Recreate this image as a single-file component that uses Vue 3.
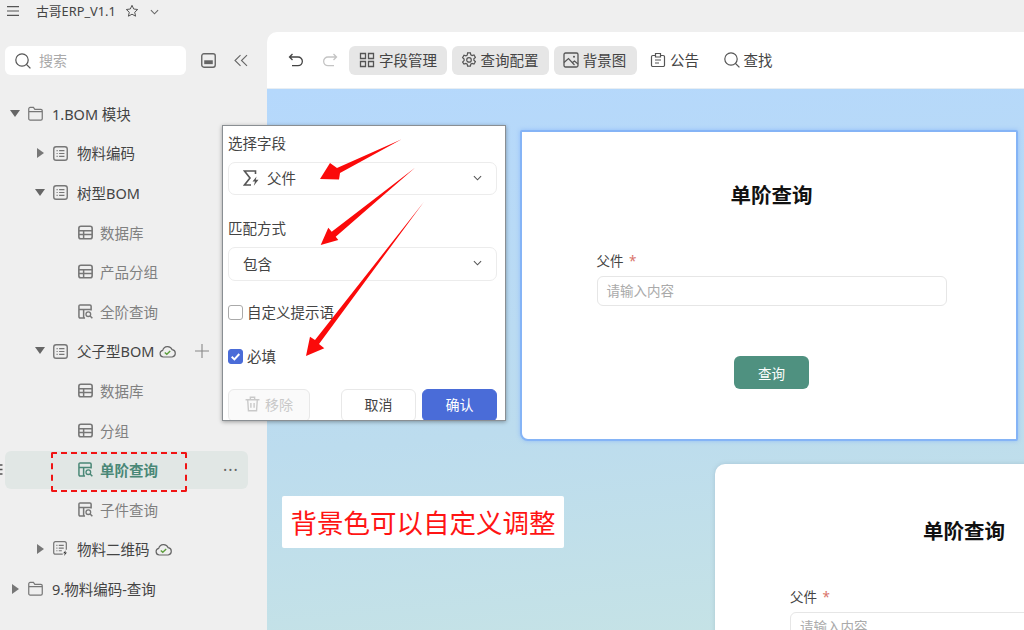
<template>
  <div class="app">
    <svg class="sprite" width="0" height="0">
      <defs>
        <symbol id="i-folder" viewBox="0 0 16 16">
          <path d="M.8 3a1.500 1.500 0 0 1 1.500-1.500h3.500l1.500 2h6.400A1.500 1.500 0 0 1 15.200 5v8.500a1.500 1.500 0 0 1-1.500 1.500H2.300a1.500 1.500 0 0 1-1.500-1.500zM.8 6h14.400" fill="none" stroke="currentColor" stroke-width="1.300" />
        </symbol>
        <symbol id="i-list" viewBox="0 0 16 16">
          <rect x=".8" y=".8" width="14.400" height="14.400" rx="2.500" fill="none" stroke="currentColor" stroke-width="1.500" />
          <path d="M3.800 5h1.200M3.800 8h1.200M3.800 11h1.200M6.500 5h5.700M6.500 8h5.700M6.500 11h5.700" stroke="currentColor" stroke-width="1.300" />
        </symbol>
        <symbol id="i-listbolt" viewBox="0 0 17 17">
          <path d="M11 15H2.800A1.900 1.900 0 0 1 .8 13V2.800A1.900 1.900 0 0 1 2.800.8h10.400a1.900 1.900 0 0 1 1.900 2V10" fill="none" stroke="currentColor" stroke-width="1.400" />
          <path d="M3.800 5h1.200M3.800 8h1.200M3.800 11h1.200M6.500 5h5.700M6.500 8h5.700M6.500 11h3.500" stroke="currentColor" stroke-width="1.300" />
          <path d="M14.500 10.500l-3 3.500h2l-1 3 3.300-4h-2z" fill="#333" />
        </symbol>
        <symbol id="i-table" viewBox="0 0 16 16">
          <rect x=".9" y="1.400" width="14.200" height="13.200" rx="2.200" fill="none" stroke="currentColor" stroke-width="1.700" />
          <path d="M1 6h14M1 10.200h14M6 6v8.500" stroke="currentColor" stroke-width="1.600" />
        </symbol>
        <symbol id="i-query" viewBox="0 0 16 16">
          <path d="M7.500 15H2.300A1.300 1.300 0 0 1 1 13.700V2.300A1.300 1.300 0 0 1 2.300 1h10.400A1.300 1.300 0 0 1 14 2.300V7M1 5.800h13M6 5.800V15" fill="none" stroke="currentColor" stroke-width="1.600" />
          <circle cx="11" cy="10.800" r="2.500" fill="none" stroke="currentColor" stroke-width="1.400" />
          <path d="M12.900 12.700l2.400 2.500" stroke="currentColor" stroke-width="1.600" />
        </symbol>
        <symbol id="i-search" viewBox="0 0 16 16">
          <circle cx="7" cy="7" r="6.200" fill="none" stroke="currentColor" stroke-width="1.200" />
          <path d="M11.400 11.400l4 4" stroke="currentColor" stroke-width="1.300" />
        </symbol>
        <symbol id="i-chevron" viewBox="0 0 10 6">
          <path d="M1 1l4 4 4-4" fill="none" stroke="currentColor" stroke-width="1.200" />
        </symbol>
        <symbol id="i-sigma" viewBox="0 0 16 16">
          <path d="M12.500 4V1H1.500L7 8 1.500 15H8" fill="none" stroke="currentColor" stroke-width="1.600" />
          <path d="M13.500 6.500l-4 5h2.500l-1.200 4.300 4.700-6h-2.700z" fill="currentColor" />
        </symbol>
      </defs>
    </svg>

    <header class="topbar">
      <svg class="menu-icon" viewBox="0 0 12 10"><path d="M0 .6h12M0 5h12M0 9.400h12" stroke="#555" stroke-width="1.100" /></svg>
      <span class="app-title">古哥ERP_V1.1</span>
      <svg class="star-icon" viewBox="0 0 14 14"><path d="M7 1.300l1.700 3.700 4 .5-3 2.700.9 4L7 10.200l-3.600 2 .9-4-3-2.700 4-.5z" fill="none" stroke="#555" stroke-width="1" /></svg>
      <svg class="title-chevron"><use href="#i-chevron" /></svg>
    </header>

    <div class="body">
      <aside class="sidebar">
        <div class="search-row">
          <div class="search-box">
            <svg class="search-icon"><use href="#i-search" /></svg>
            <span>搜索</span>
          </div>
          <svg class="panel-icon" viewBox="0 0 14 14">
            <rect x=".7" y=".7" width="12.600" height="12.600" rx="2" fill="none" stroke="#666" stroke-width="1.300" />
            <rect x="3" y="6.800" width="8" height="3.600" fill="#666" />
          </svg>
          <svg class="collapse-icon" viewBox="0 0 14 12"><path d="M6.500 .6L1 6l5.500 5.400M13 .6L7.500 6l5.500 5.400" fill="none" stroke="#666" stroke-width="1.100" /></svg>
        </div>

        <ul class="tree">
          <li v-for="row in rows" :key="row.id" class="row" :class="['level-' + row.level, { active: row.active }]">
            <span class="caret" :class="row.caret"></span>
            <svg class="row-icon"><use :href="'#i-' + row.icon" /></svg>
            <span class="row-label">{{ row.label }}</span>
            <svg v-if="row.cloud" class="cloud" viewBox="0 0 17 14">
              <path d="M4.300 13a3.400 3.400 0 0 1-.6-6.700 5 5 0 0 1 9.500-.6 3.700 3.700 0 0 1 0 7.300z" fill="none" stroke="#666" stroke-width="1.200" />
              <path d="M5.800 8.400l2 1.900 3.400-3.200" fill="none" stroke="#5d9e3c" stroke-width="1.400" />
            </svg>
            <svg v-if="row.plus" class="plus" viewBox="0 0 14 14"><path d="M7 0v14M0 7h14" stroke="#888" stroke-width="1.100" /></svg>
            <span v-if="row.active" class="more">···</span>
          </li>
        </ul>
      </aside>

      <main class="main">
        <div class="toolbar">
          <svg class="undo" viewBox="0 0 16 14"><path d="M4.500 1L1.500 4l3 3M1.500 4H10a4.300 4.300 0 0 1 0 8.700H4" fill="none" stroke="#444" stroke-width="1.300" /></svg>
          <svg class="redo" viewBox="0 0 16 14"><path d="M11.500 1l3 3-3 3M14.500 4H6a4.300 4.300 0 0 0 0 8.700h6" fill="none" stroke="#c4c4c4" stroke-width="1.300" /></svg>
          <button class="tool on tool-fields">
            <svg viewBox="0 0 16 16"><path d="M1.500 1.500h5v5h-5zM9.500 1.500h5v5h-5zM1.500 9.500h5v5h-5zM9.500 9.500h5v5h-5z" fill="none" stroke="#555" stroke-width="1.300" /></svg>
            <span>字段管理</span>
          </button>
          <button class="tool on tool-query">
            <svg viewBox="0 0 16 16"><path d="M6.600 .9h2.800l.4 2 1.300.7 1.900-.6 1.400 2.400-1.500 1.400v1.500l1.500 1.400-1.400 2.400-1.900-.6-1.300.7-.4 2H6.600l-.4-2-1.300-.7-1.900.6L1.600 10l1.500-1.400V7.100L1.600 5.700 3 3.300l1.900.6 1.300-.7z" fill="none" stroke="#555" stroke-width="1.200" /><circle cx="8" cy="7.900" r="2.300" fill="none" stroke="#555" stroke-width="1.200" /></svg>
            <span>查询配置</span>
          </button>
          <button class="tool on tool-bg">
            <svg viewBox="0 0 16 16"><rect x="1" y="1" width="14" height="14" rx="1.500" fill="none" stroke="#555" stroke-width="1.300" /><path d="M1 10.500L5.500 6.500l6 6.500M9.500 10.500l2-1.500 3.500 3" fill="none" stroke="#555" stroke-width="1.200" /><circle cx="11" cy="4.800" r="1" fill="#555" /></svg>
            <span>背景图</span>
          </button>
          <button class="tool tool-notice">
            <svg viewBox="0 0 16 16"><path d="M5 3.500H2.800a1.300 1.300 0 0 0-1.300 1.300v8.400a1.300 1.300 0 0 0 1.300 1.300h10.400a1.300 1.300 0 0 0 1.300-1.300V4.800a1.300 1.300 0 0 0-1.300-1.300H11M5.500 1.500h5v3.500h-5zM5 8h6M5 11h4" fill="none" stroke="#555" stroke-width="1.200" /></svg>
            <span>公告</span>
          </button>
          <button class="tool tool-find">
            <svg><use href="#i-search" /></svg>
            <span>查找</span>
          </button>
        </div>

        <div class="canvas">
          <section class="form-card first">
            <h2>单阶查询</h2>
            <div class="field">
              <label>父件 <em>*</em></label>
              <div class="input">请输入内容</div>
            </div>
            <button class="submit">查询</button>
          </section>

          <section class="form-card second">
            <h2>单阶查询</h2>
            <div class="field">
              <label>父件 <em>*</em></label>
              <div class="input">请输入内容</div>
            </div>
          </section>

          <div class="note">背景色可以自定义调整</div>
        </div>
      </main>
    </div>

    <div class="popover">
      <div class="pop-label">选择字段</div>
      <div class="select">
        <svg class="sigma"><use href="#i-sigma" /></svg>
        <span>父件</span>
        <svg class="sel-chevron"><use href="#i-chevron" /></svg>
      </div>
      <div class="pop-label second-label">匹配方式</div>
      <div class="select plain">
        <span>包含</span>
        <svg class="sel-chevron"><use href="#i-chevron" /></svg>
      </div>
      <div class="check first-check"><i class="box"></i>自定义提示语</div>
      <div class="check second-check">
        <i class="box checked"><svg viewBox="0 0 12 12"><path d="M2.500 6.200l2.500 2.500 4.500-5" fill="none" stroke="#fff" stroke-width="1.800" /></svg></i>必填
      </div>
      <div class="pop-actions">
        <button class="btn remove">
          <svg viewBox="0 0 14 15"><path d="M.5 3.500h13M5 3.500V1.200h4v2.300M2.500 3.500l.7 10.300h7.600l.7-10.300M5.500 6.500v4.500M8.500 6.500v4.500" fill="none" stroke="#c9c9c9" stroke-width="1.300" /></svg>
          移除
        </button>
        <button class="btn cancel">取消</button>
        <button class="btn confirm">确认</button>
      </div>
    </div>

    <svg class="arrows" viewBox="0 0 1024 630">
      <polygon v-for="(a, i) in arrows" :key="i" :points="a" fill="#fb0a0a" />
    </svg>
    <div class="dashed"></div>
    <svg class="grip" viewBox="0 0 3 12"><path d="M0 1h2.500M0 5.500h2.500M0 10h2.500" stroke="#555" stroke-width="1.600" /></svg>
  </div>
</template>

<script setup>
const rows = [
  { id: 1, level: 0, caret: 'down', icon: 'folder', label: '1.BOM 模块' },
  { id: 2, level: 1, caret: 'right', icon: 'list', label: '物料编码' },
  { id: 3, level: 1, caret: 'down', icon: 'list', label: '树型BOM' },
  { id: 4, level: 2, icon: 'table', label: '数据库' },
  { id: 5, level: 2, icon: 'table', label: '产品分组' },
  { id: 6, level: 2, icon: 'query', label: '全阶查询' },
  { id: 7, level: 1, caret: 'down', icon: 'list', label: '父子型BOM', cloud: true, plus: true },
  { id: 8, level: 2, icon: 'table', label: '数据库' },
  { id: 9, level: 2, icon: 'table', label: '分组' },
  { id: 10, level: 2, icon: 'query', label: '单阶查询', active: true },
  { id: 11, level: 2, icon: 'query', label: '子件查询' },
  { id: 12, level: 1, caret: 'right', icon: 'listbolt', label: '物料二维码', cloud: true },
  { id: 13, level: 0, caret: 'right', icon: 'folder', label: '9.物料编码-查询' }
]

const arrows = [
  '401.7,139.3 337,168 330,163 320,179 339,179.5 340,173',
  '415,167.7 331.7,231.7 328.3,227.7 320.7,245 338.3,240 335.7,236.700',
  '424,201.7 315,340 310,336.700 306,356 324.300,348.300 319,344'
]
</script>

<style>
html,
body {
  margin: 0;
  background: #efefef;
}
</style>

<style scoped>
.app {
  position: relative;
  width: 1024px;
  height: 630px;
  overflow: hidden;
  background: #efefef;
  color: #333;
  font-family: "Noto Sans", "Noto Sans CJK SC", sans-serif;
  font-size: 14.5px;
}

.sprite {
  display: block;
}

.topbar {
  height: 32px;
  display: flex;
  align-items: flex-start;
  padding-left: 7px;
  box-sizing: border-box;
}

.menu-icon {
  width: 12px;
  height: 10px;
  margin-top: 6px;
}

.app-title {
  margin-left: 17px;
  font-size: 12.800px;
  line-height: 22px;
  color: #444;
}

.star-icon {
  width: 14px;
  height: 14px;
  margin: 4px 0 0 9px;
}

.title-chevron {
  width: 9px;
  height: 6px;
  margin: 9px 0 0 11px;
  color: #666;
}

.body {
  display: flex;
  height: 598px;
}

.sidebar {
  width: 267px;
  flex-shrink: 0;
  padding-top: 14px;
  box-sizing: border-box;
}

.search-row {
  display: flex;
  align-items: center;
  padding-left: 5px;
}

.search-box {
  width: 181px;
  height: 29px;
  background: #fff;
  border-radius: 6px;
  display: flex;
  align-items: center;
  padding: 0 0 2px 10px;
  box-sizing: border-box;
  color: #aaa;
  font-size: 14px;
}

.search-icon {
  width: 16px;
  height: 16px;
  margin: 2px 8px 0 0;
  color: #555;
}

.panel-icon {
  width: 15px;
  height: 15px;
  margin-left: 15px;
}

.collapse-icon {
  width: 14px;
  height: 13px;
  margin-left: 18px;
}

.tree {
  position: relative;
  z-index: 0;
  list-style: none;
  margin: 18.800px 0 0;
  padding: 0;
}

.row {
  height: 39.580px;
  display: flex;
  align-items: center;
  position: relative;
  color: #444;
}

.row.level-0 {
  padding-left: 10px;
}

.row.level-1 {
  padding-left: 35px;
}

.row.level-2 {
  padding-left: 60px;
  color: #808080;
}

.caret {
  width: 18px;
  flex-shrink: 0;
  height: 10px;
  position: relative;
}

.caret.down::before {
  content: "";
  position: absolute;
  left: 0;
  top: 1px;
  border-left: 5px solid transparent;
  border-right: 5px solid transparent;
  border-top: 7px solid #666;
}

.caret.right::before {
  content: "";
  position: absolute;
  left: 2px;
  top: 0;
  border-top: 5px solid transparent;
  border-bottom: 5px solid transparent;
  border-left: 7px solid #777;
}

.row-icon {
  width: 15px;
  height: 15px;
  margin-right: 9px;
  color: #777;
  flex-shrink: 0;
}

.level-2 .row-icon {
  margin-right: 7px;
  color: #777;
}

.row.active {
  color: #4a8877;
  font-weight: 700;
}

.row.active .row-icon {
  color: #4a8877;
}

.row.active::before {
  content: "";
  position: absolute;
  z-index: -1;
  left: 5px;
  width: 243px;
  top: 1px;
  bottom: 1px;
  border-radius: 6px;
  background: #e1e7e5;
}

.cloud {
  width: 17px;
  height: 14px;
  margin-left: 5px;
  flex-shrink: 0;
}

.plus {
  width: 14px;
  height: 14px;
  margin-left: 19px;
}

.level-1 .row-label {
  line-height: 20px;
}

.more {
  position: absolute;
  left: 223px;
  color: #666;
  font-weight: 400;
  font-size: 16px;
  letter-spacing: 1px;
}

.main {
  flex: 1;
  display: flex;
  flex-direction: column;
  background: #fff;
  border-top-left-radius: 10px;
  overflow: hidden;
}

.toolbar {
  height: 57px;
  flex-shrink: 0;
  display: flex;
  align-items: center;
  padding-left: 21px;
  box-sizing: border-box;
  border-bottom: 1px solid #e8eef3;
}

.undo,
.redo {
  width: 16px;
  height: 14px;
  flex-shrink: 0;
}

.redo {
  margin-left: 18px;
}

.tool {
  height: 29px;
  border: none;
  border-radius: 6px;
  background: transparent;
  padding: 0;
  display: flex;
  align-items: center;
  justify-content: center;
  gap: 4px;
  font: inherit;
  color: #444;
  flex-shrink: 0;
}

.tool span {
  margin-top: -2px;
}

.tool svg {
  width: 16px;
  height: 16px;
  color: #555;
}

.tool.on {
  background: #e6e6e6;
}

.tool-fields {
  width: 98px;
  margin-left: 11px;
}

.tool-query {
  width: 97px;
  margin-left: 5px;
  padding-right: 2px;
}

.tool-bg {
  width: 83px;
  margin-left: 5px;
  padding-right: 2px;
}

.tool-notice {
  width: 50px;
  margin-left: 14px;
  gap: 4px;
}

.tool-notice svg {
  margin-left: -3px;
}

.tool-find {
  width: 50px;
  margin-left: 22px;
}

.canvas {
  flex: 1;
  position: relative;
  overflow: hidden;
  background: linear-gradient(175deg, #b5d8fc 0%, #bcdcee 60%, #c6e3e5 100%);
}

.form-card {
  position: absolute;
  background: #fff;
  box-sizing: border-box;
  display: flex;
  flex-direction: column;
  align-items: center;
}

.form-card h2 {
  margin: 0;
  font-size: 20.500px;
  line-height: 30px;
  font-weight: 700;
  color: #111;
}

.form-card.first {
  left: 253px;
  top: 41px;
  width: 498px;
  height: 311px;
  padding: 48px 0 0 5px;
  border: 2px solid #85b4f6;
  border-radius: 2px 2px 2px 8px;
  box-shadow: 0 0 4px rgba(120, 170, 250, 0.6);
}

.form-card.second {
  left: 448px;
  top: 375px;
  width: 400px;
  height: 300px;
  padding-top: 52px;
  border-radius: 10px 0 0 0;
  align-items: flex-start;
  box-shadow: 0 0 4px rgba(120, 150, 170, 0.35);
}

.form-card.second h2 {
  margin-left: 208px;
}

.form-card.second .field {
  margin: 41px 0 0 75px;
}

.field {
  width: 350px;
  margin-top: 41px;
}

.field label {
  display: block;
  font-size: 13.500px;
  line-height: 20px;
  color: #444;
  margin-bottom: 5px;
}

.field em {
  font-style: normal;
  color: #d9736a;
  margin-left: 2px;
}

.input {
  height: 30px;
  border: 1px solid #e6e6e6;
  border-radius: 6px;
  box-sizing: border-box;
  padding-left: 9px;
  line-height: 29px;
  font-size: 13.500px;
  color: #aaa;
  background: #fff;
}

.submit {
  width: 75px;
  height: 33px;
  margin-top: 50px;
  border: none;
  border-radius: 6px;
  background: #4f9180;
  color: #fff;
  font: inherit;
  font-size: 13.500px;
}

.note {
  position: absolute;
  left: 15px;
  top: 407px;
  width: 282px;
  height: 52px;
  box-sizing: border-box;
  background: #fff;
  border-radius: 2px;
  color: #ff1414;
  font-family: "Noto Sans CJK SC", sans-serif;
  font-size: 26.500px;
  line-height: 52px;
  text-align: center;
  white-space: nowrap;
}

.popover {
  position: absolute;
  left: 222px;
  top: 125px;
  width: 284px;
  height: 296px;
  box-sizing: border-box;
  background: #fff;
  border: 1px solid #8a8f93;
  box-shadow: 0 1px 4px rgba(0, 0, 0, 0.35);
  padding: 7px 8px 0 5px;
  overflow: hidden;
  font-size: 14.500px;
  color: #444;
}

.pop-label {
  line-height: 20px;
}

.second-label {
  margin-top: 23px;
}

.select {
  height: 33px;
  margin-top: 9px;
  border: 1px solid #ececec;
  border-radius: 7px;
  box-sizing: border-box;
  display: flex;
  align-items: center;
  padding: 0 0 2px 14px;
  position: relative;
}

.select.plain {
  height: 34px;
}

.sigma {
  width: 16px;
  height: 16px;
  margin-right: 8px;
  color: #555;
}

.sel-chevron {
  position: absolute;
  right: 14px;
  width: 9px;
  height: 6px;
  color: #555;
}

.check {
  display: flex;
  align-items: center;
  line-height: 20px;
}

.first-check {
  margin-top: 21px;
}

.second-check {
  margin-top: 24px;
}

.box {
  width: 15px;
  height: 15px;
  box-sizing: border-box;
  border: 1px solid #aaa;
  border-radius: 3px;
  margin-right: 4px;
  display: block;
}

.box.checked {
  background: #4a6cd8;
  border-color: #4a6cd8;
}

.box.checked svg {
  display: block;
  width: 13px;
  height: 13px;
}

.pop-actions {
  display: flex;
  margin-top: 23px;
}

.btn {
  height: 33px;
  border: 1px solid #e8e8e8;
  border-radius: 6px;
  background: #fff;
  font: inherit;
  font-size: 14px;
  color: #444;
  padding: 0 0 3px;
  display: flex;
  align-items: center;
  justify-content: center;
  box-sizing: border-box;
}

.remove {
  width: 82px;
  color: #c9c9c9;
  background: #fafafa;
  gap: 5px;
}

.remove svg {
  width: 15px;
  height: 16px;
}

.cancel {
  width: 75px;
  margin-left: 31px;
}

.confirm {
  width: 75px;
  margin-left: 6px;
  background: #4a6cd8;
  border-color: #4a6cd8;
  color: #fff;
}

.arrows {
  position: absolute;
  left: 0;
  top: 0;
  width: 1024px;
  height: 630px;
  pointer-events: none;
}

.dashed {
  position: absolute;
  left: 51px;
  top: 452px;
  width: 136px;
  height: 40px;
  box-sizing: border-box;
  border: 2px dashed #f01414;
  border-radius: 2px;
}

.grip {
  position: absolute;
  left: 0;
  top: 464px;
  width: 3px;
  height: 12px;
}
</style>
